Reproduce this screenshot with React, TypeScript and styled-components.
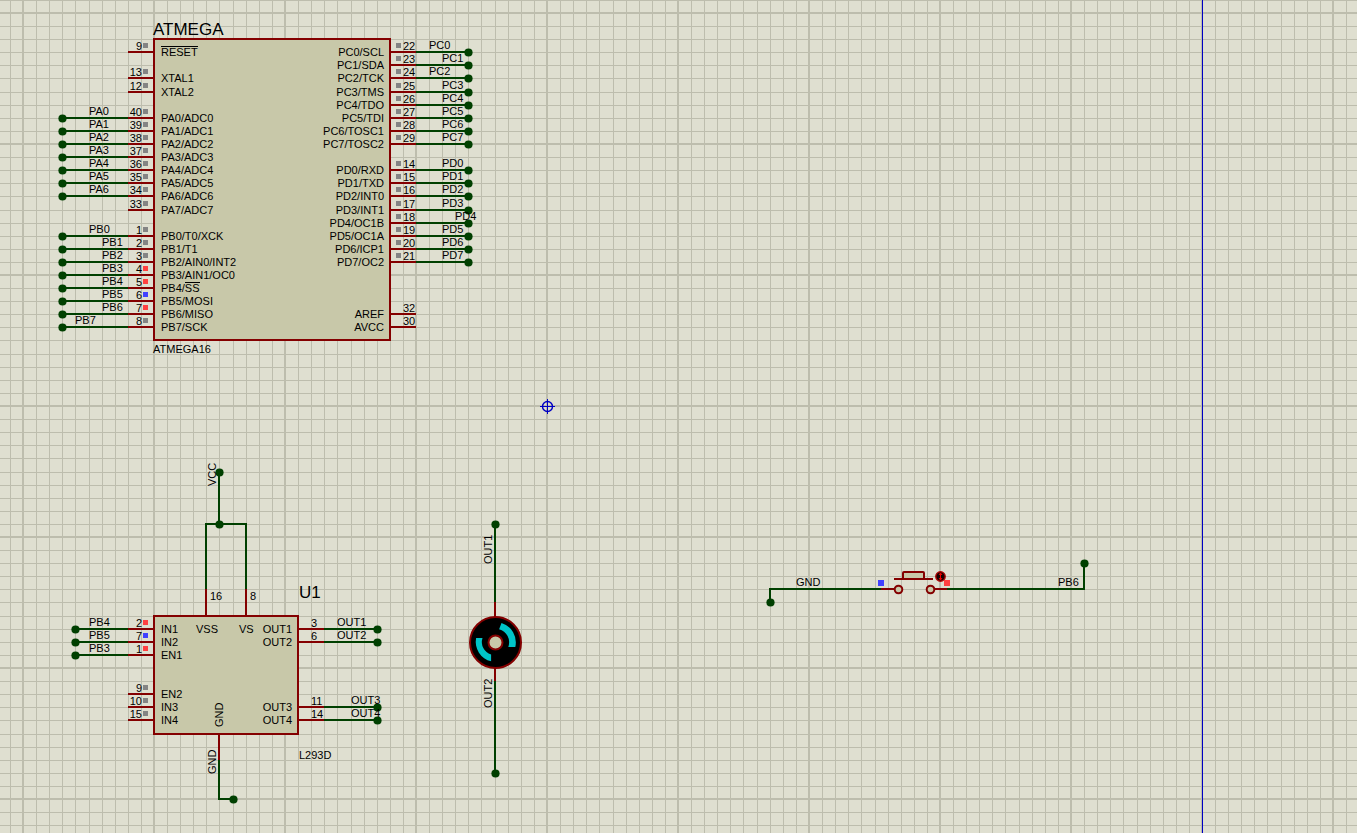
import React from "react";
import styled, { createGlobalStyle } from "styled-components";

const color = {
  paper: "#dfdfd0",
  grid: "#bdbdad",
  body: "#c8c8a9",
  part: "#840000",
  wire: "#004000",
  sheet: "#0000c4",
  ink: "#000000",
  idle: "#848484",
  high: "#ff4141",
  low: "#4141ff",
};

type Level = "idle" | "high" | "low";

/* One grid cell is 13.1px, so twenty cells make an even 262px. */
const snap = (origin: number, cell: number) => {
  const phase = ((cell % 20) + 20) % 20;
  return Math.round(origin + (cell * 131) / 10 + (phase === 5 ? 0.01 : -0.01));
};
const gx = (cell: number) => snap(547, cell);
const gy = (cell: number) => snap(406, cell);

const GlobalStyle = createGlobalStyle`
  html, body, #root { height: 100%; }
  body {
    margin: 0;
    background: ${color.paper};
    color: ${color.ink};
    font-family: "Liberation Sans", Arial, sans-serif;
    font-size: 11px;
    line-height: 12px;
  }
`;

const Sheet = styled.main`
  position: relative;
  width: 100%;
  min-height: 100%;
  overflow: hidden;
`;

const Drawing = styled.svg`
  position: absolute;
  inset: 0;
  width: 100%;
  height: 100%;
  display: block;
`;

/* A part on the canvas: pin leads on both sides of the body, one grid row per cell. */
const ChipFrame = styled.section`
  position: absolute;
  display: grid;
  grid-template-columns: 26px 1fr 26px;
`;

const ChipBody = styled.div`
  grid-column: 2;
  grid-row: 1 / -1;
  margin: -1px;
  border: 2px solid ${color.part};
  background: ${color.body};
`;

const PinName = styled.span<{ $side: "left" | "right"; $row: number }>`
  grid-column: 2;
  grid-row: ${(p) => p.$row};
  justify-self: ${(p) => (p.$side === "left" ? "start" : "end")};
  align-self: end;
  margin: 0 6px -6px 7px;
  white-space: nowrap;
`;

const Lead = styled.div<{ $side: "left" | "right"; $row: number }>`
  grid-column: ${(p) => (p.$side === "left" ? 1 : 3)};
  grid-row: ${(p) => p.$row};
  display: grid;
  grid-template-columns: ${(p) => (p.$side === "left" ? "1fr 5px" : "5px 1fr")};
  column-gap: ${(p) => (p.$side === "left" ? 1 : 2)}px;
  padding: ${(p) => (p.$side === "left" ? "0 6px 0 0" : "0 0 0 6px")};
  align-items: end;
`;

const PinNumber = styled.span<{ $side: "left" | "right" }>`
  grid-row: 1;
  grid-column: ${(p) => (p.$side === "left" ? 1 : 2)};
  text-align: ${(p) => (p.$side === "left" ? "right" : "left")};
`;

const LeadProbe = styled.i<{ $side: "left" | "right"; $level: Level }>`
  grid-row: 1;
  grid-column: ${(p) => (p.$side === "left" ? 2 : 1)};
  height: 5px;
  margin-bottom: 4px;
  background: ${(p) => color[p.$level]};
`;

const ActiveLow = styled.span`
  display: inline-block;
  position: relative;
  &::before {
    content: "";
    position: absolute;
    inset: 0 0 auto;
    border-top: 1px solid ${color.ink};
  }
`;

const WireProbe = styled.i<{ $level: Level }>`
  position: absolute;
  width: 6px;
  height: 6px;
  background: ${(p) => color[p.$level]};
`;

const Caption = styled.span`
  position: absolute;
  white-space: nowrap;
`;

const Reference = styled.h2`
  position: absolute;
  margin: 0;
  font-size: 17px;
  font-weight: 400;
  line-height: 20px;
  white-space: nowrap;
`;

const UprightCaption = styled(Caption)`
  transform: rotate(-90deg);
  transform-origin: 0 0;
`;

interface Pin {
  row: number;
  num: string;
  name: string;
  bar?: string;
  level?: Level;
  net?: string;
  netAt?: number;
}

interface Chip {
  ref: string;
  left: number;
  right: number;
  top: number;
  bottom: number;
  leftEnd: number;
  rightEnd: number;
  leftPins: Pin[];
  rightPins: Pin[];
}

const pin = (
  row: number,
  num: number,
  name: string,
  level?: Level,
  net?: string,
  netAt?: number,
  bar?: string,
): Pin => ({ row, num: String(num), name, level, net, netAt, bar });

const atmega: Chip = {
  ref: "ATMEGA",
  left: -30,
  right: -12,
  top: -28,
  bottom: -5,
  leftEnd: -37,
  rightEnd: -6,
  leftPins: [
    pin(-27, 9, "", "idle", undefined, undefined, "RESET"),
    pin(-25, 13, "XTAL1", "idle"),
    pin(-24, 12, "XTAL2", "idle"),
    pin(-22, 40, "PA0/ADC0", "idle", "PA0", -35),
    pin(-21, 39, "PA1/ADC1", "idle", "PA1", -35),
    pin(-20, 38, "PA2/ADC2", "idle", "PA2", -35),
    pin(-19, 37, "PA3/ADC3", "idle", "PA3", -35),
    pin(-18, 36, "PA4/ADC4", "idle", "PA4", -35),
    pin(-17, 35, "PA5/ADC5", "idle", "PA5", -35),
    pin(-16, 34, "PA6/ADC6", "idle", "PA6", -35),
    pin(-15, 33, "PA7/ADC7", "idle"),
    pin(-13, 1, "PB0/T0/XCK", "idle", "PB0", -35),
    pin(-12, 2, "PB1/T1", "idle", "PB1", -34),
    pin(-11, 3, "PB2/AIN0/INT2", "idle", "PB2", -34),
    pin(-10, 4, "PB3/AIN1/OC0", "high", "PB3", -34),
    pin(-9, 5, "PB4/", "high", "PB4", -34, "SS"),
    pin(-8, 6, "PB5/MOSI", "low", "PB5", -34),
    pin(-7, 7, "PB6/MISO", "high", "PB6", -34),
    pin(-6, 8, "PB7/SCK", "idle", "PB7", -36),
  ],
  rightPins: [
    pin(-27, 22, "PC0/SCL", "idle", "PC0", -9),
    pin(-26, 23, "PC1/SDA", "idle", "PC1", -8),
    pin(-25, 24, "PC2/TCK", "idle", "PC2", -9),
    pin(-24, 25, "PC3/TMS", "idle", "PC3", -8),
    pin(-23, 26, "PC4/TDO", "idle", "PC4", -8),
    pin(-22, 27, "PC5/TDI", "idle", "PC5", -8),
    pin(-21, 28, "PC6/TOSC1", "idle", "PC6", -8),
    pin(-20, 29, "PC7/TOSC2", "idle", "PC7", -8),
    pin(-18, 14, "PD0/RXD", "idle", "PD0", -8),
    pin(-17, 15, "PD1/TXD", "idle", "PD1", -8),
    pin(-16, 16, "PD2/INT0", "idle", "PD2", -8),
    pin(-15, 17, "PD3/INT1", "idle", "PD3", -8),
    pin(-14, 18, "PD4/OC1B", "idle", "PD4", -7),
    pin(-13, 19, "PD5/OC1A", "idle", "PD5", -8),
    pin(-12, 20, "PD6/ICP1", "idle", "PD6", -8),
    pin(-11, 21, "PD7/OC2", "idle", "PD7", -8),
    pin(-7, 32, "AREF"),
    pin(-6, 30, "AVCC"),
  ],
};

const driver: Chip = {
  ref: "U1",
  left: -30,
  right: -19,
  top: 16,
  bottom: 25,
  leftEnd: -36,
  rightEnd: -13,
  leftPins: [
    pin(17, 2, "IN1", "high", "PB4", -35),
    pin(18, 7, "IN2", "low", "PB5", -35),
    pin(19, 1, "EN1", "high", "PB3", -35),
    pin(22, 9, "EN2", "idle"),
    pin(23, 10, "IN3", "idle"),
    pin(24, 15, "IN4", "idle"),
  ],
  rightPins: [
    pin(17, 3, "OUT1", undefined, "OUT1", -16),
    pin(18, 6, "OUT2", undefined, "OUT2", -16),
    pin(23, 11, "OUT3", undefined, "OUT3", -15),
    pin(24, 14, "OUT4", undefined, "OUT4", -15),
  ],
};

const chips = [atmega, driver];

type Mark = { text: string; x: number; y: number };

/* x is the start of the text, y its baseline. */
const references: Mark[] = [
  { text: "ATMEGA", x: gx(-30) - 1, y: gy(-28) - 3 },
  { text: "U1", x: gx(-19) + 1, y: gy(15) - 3 },
];

const captions: Mark[] = [
  { text: "ATMEGA16", x: gx(-30) - 1, y: gy(-4) - 1 },
  { text: "L293D", x: gx(-19) + 1, y: gy(27) - 1 },
  { text: "VSS", x: gx(-26) - 10, y: gy(17) + 4 },
  { text: "VS", x: gx(-23) - 7, y: gy(17) + 4 },
  { text: "16", x: gx(-26) + 4, y: gy(15) - 2 },
  { text: "8", x: gx(-23) + 4, y: gy(15) - 2 },
  { text: "GND", x: gx(19), y: gy(14) - 3 },
  { text: "PB6", x: gx(39), y: gy(14) - 3 },
];

const uprightCaptions: Mark[] = [
  { text: "VCC", x: gx(-25) - 3, y: gy(6) + 1 },
  { text: "GND", x: gx(-25) + 4, y: gy(24) + 7 },
  { text: "GND", x: gx(-25) - 3, y: gy(28) + 1 },
  { text: "OUT1", x: gx(-4) - 3, y: gy(12) + 1 },
  { text: "OUT2", x: gx(-4) - 3, y: gy(23) + 1 },
];

type Point = [number, number];

function Line({ points, part }: { points: Point[]; part?: boolean }) {
  return (
    <polyline
      points={points.map((p) => p.join(",")).join(" ")}
      fill="none"
      stroke={part ? color.part : color.wire}
      strokeWidth={2}
    />
  );
}

function Dot({ x, y }: { x: number; y: number }) {
  return <circle cx={x + 0.5} cy={y + 0.5} r={4.1} fill={color.wire} />;
}

function Grid() {
  const cells = Array.from({ length: 20 }, (_, i) => i);
  return (
    <>
      <defs>
        <pattern id="grid" x={22} y={143} width={262} height={262} patternUnits="userSpaceOnUse">
          {cells.map((i) => {
            const major = i % 10 === 0;
            const at = snap(1, i) - (major ? 1 : 0);
            const size = major ? 2 : 1;
            return (
              <g key={i} fill={color.grid}>
                <rect x={at} y={0} width={size} height={262} />
                <rect x={0} y={at} width={262} height={size} />
              </g>
            );
          })}
        </pattern>
      </defs>
      <rect width="100%" height="100%" fill="url(#grid)" shapeRendering="crispEdges" />
      <rect x={gx(50)} y={0} width={1} height="100%" fill={color.sheet} />
    </>
  );
}

function ChipWires({ chip }: { chip: Chip }) {
  const leftTip = gx(chip.left - 2);
  const rightTip = gx(chip.right + 2);
  return (
    <>
      {chip.leftPins.map((p) => {
        const y = gy(p.row);
        return (
          <g key={p.num}>
            <Line part points={[[leftTip, y], [gx(chip.left), y]]} />
            {p.net && <Line points={[[gx(chip.leftEnd), y], [leftTip, y]]} />}
            {p.net && <Dot x={gx(chip.leftEnd)} y={y} />}
          </g>
        );
      })}
      {chip.rightPins.map((p) => {
        const y = gy(p.row);
        return (
          <g key={p.num}>
            <Line part points={[[gx(chip.right), y], [rightTip, y]]} />
            {p.net && <Line points={[[rightTip, y], [gx(chip.rightEnd), y]]} />}
            {p.net && <Dot x={gx(chip.rightEnd)} y={y} />}
          </g>
        );
      })}
    </>
  );
}

function PowerWires() {
  const x = gx(-25);
  return (
    <>
      <Line part points={[[gx(-26), gy(14)], [gx(-26), gy(16)]]} />
      <Line part points={[[gx(-23), gy(14)], [gx(-23), gy(16)]]} />
      <Line points={[[gx(-26), gy(14)], [gx(-26), gy(9)], [gx(-23), gy(9)], [gx(-23), gy(14)]]} />
      <Line points={[[x, gy(5)], [x, gy(9)]]} />
      <Dot x={x} y={gy(5)} />
      <Dot x={x} y={gy(9)} />
      <Line part points={[[x, gy(25)], [x, gy(27)]]} />
      <Line points={[[x, gy(27)], [x, gy(30)], [gx(-24), gy(30)]]} />
      <Dot x={gx(-24)} y={gy(30)} />
    </>
  );
}

function Motor() {
  const x = gx(-4);
  const y = gy(18);
  return (
    <>
      <Line points={[[x, gy(9)], [x, gy(15)]]} />
      <Line part points={[[x, gy(15)], [x, gy(21)]]} />
      <Line points={[[x, gy(21)], [x, gy(28)]]} />
      <Dot x={x} y={gy(9)} />
      <Dot x={x} y={gy(28)} />
      <g transform={`translate(${x + 0.5} ${y + 0.5})`}>
        <circle r={25.5} fill="#000" stroke={color.part} strokeWidth={2} />
        <path d="M6 -19.6A20.5 20.5 0 0 1 19.8 4.5H12.8A13.5 13.5 0 0 0 3.6 -13.2Z" fill="#00c4c8" />
        <path d="M-19.4 -4.5A20 20 0 0 0 -4.4 18.8V12A13 13 0 0 1 -13 -4.5Z" fill="#00c4c8" />
        <circle r={7} fill={color.body} stroke={color.part} strokeWidth={2} />
      </g>
    </>
  );
}

function PushButton() {
  const y = gy(14);
  return (
    <>
      <Line part points={[[880, y], [895, y]]} />
      <Line part points={[[934, y], [948, y]]} />
      <Line points={[[gx(17), gy(15)], [gx(17), y], [881, y]]} />
      <Line points={[[947, y], [gx(41), y], [gx(41), gy(12)]]} />
      <Dot x={gx(17)} y={gy(15)} />
      <Dot x={gx(41)} y={gy(12)} />
      <g stroke={color.part} fill={color.body} strokeWidth={2}>
        <rect x={903} y={572} width={21} height={7} rx={1} />
        <path d="M894 579H933" />
        <circle cx={898.5} cy={589.5} r={3.8} />
        <circle cx={930.5} cy={589.5} r={3.8} />
      </g>
      <circle cx={940.5} cy={576.5} r={4.7} fill="#180000" stroke="#b00000" strokeWidth={1.4} />
      <path
        d="M940.5 573V580M939 575L940.5 573L942 575M939 578L940.5 580L942 578"
        fill="none"
        stroke="#f00000"
        strokeWidth={1}
      />
    </>
  );
}

function Origin() {
  return (
    <g transform={`translate(${gx(0) + 0.5} ${gy(0) + 0.5})`} fill="none" stroke={color.sheet}>
      <circle r={5} strokeWidth={1.4} />
      <path d="M-7.5 0H7.5M0 -7.5V7.5" />
    </g>
  );
}

const ASCENT = 10;
const REFERENCE_ASCENT = 16;

function NetLabels({ chip }: { chip: Chip }) {
  return (
    <>
      {[...chip.leftPins, ...chip.rightPins].map(
        (p) =>
          p.net &&
          p.netAt !== undefined && (
            <Caption key={p.num} style={{ left: gx(p.netAt), top: gy(p.row) - 3 - ASCENT }}>
              {p.net}
            </Caption>
          ),
      )}
    </>
  );
}

function ChipPins({ pins, side, top }: { pins: Pin[]; side: "left" | "right"; top: number }) {
  return (
    <>
      {pins.map((p) => (
        <React.Fragment key={p.num}>
          <Lead $side={side} $row={p.row - top}>
            <PinNumber $side={side}>{p.num}</PinNumber>
            {p.level && <LeadProbe $side={side} $level={p.level} />}
          </Lead>
          <PinName $side={side} $row={p.row - top}>
            {p.name}
            {p.bar && <ActiveLow>{p.bar}</ActiveLow>}
          </PinName>
        </React.Fragment>
      ))}
    </>
  );
}

function ChipView({ chip }: { chip: Chip }) {
  const left = gx(chip.left) - 26;
  const rows = Array.from(
    { length: chip.bottom - chip.top },
    (_, i) => `${gy(chip.top + i + 1) - gy(chip.top + i)}px`,
  );
  return (
    <ChipFrame
      aria-label={chip.ref}
      style={{
        left,
        top: gy(chip.top),
        width: gx(chip.right) + 26 - left,
        gridTemplateRows: rows.join(" "),
      }}
    >
      <ChipBody />
      <ChipPins pins={chip.leftPins} side="left" top={chip.top} />
      <ChipPins pins={chip.rightPins} side="right" top={chip.top} />
    </ChipFrame>
  );
}

export default function App() {
  return (
    <>
      <GlobalStyle />
      <Sheet>
        <Drawing aria-hidden="true">
          <Grid />
          {chips.map((chip) => (
            <ChipWires key={chip.ref} chip={chip} />
          ))}
          <PowerWires />
          <Motor />
          <PushButton />
          <Origin />
        </Drawing>
        {chips.map((chip) => (
          <React.Fragment key={chip.ref}>
            <ChipView chip={chip} />
            <NetLabels chip={chip} />
          </React.Fragment>
        ))}
        {references.map((m) => (
          <Reference key={m.text} style={{ left: m.x, top: m.y - REFERENCE_ASCENT }}>
            {m.text}
          </Reference>
        ))}
        {captions.map((m) => (
          <Caption key={m.text} style={{ left: m.x, top: m.y - ASCENT }}>
            {m.text}
          </Caption>
        ))}
        {uprightCaptions.map((m) => (
          <UprightCaption key={`${m.text}-${m.y}`} style={{ left: m.x - ASCENT, top: m.y }}>
            {m.text}
          </UprightCaption>
        ))}
        <WireProbe $level="low" style={{ left: gx(25) + 3, top: gy(14) - 9 }} />
        <WireProbe $level="high" style={{ left: gx(30) + 4, top: gy(14) - 9 }} />
      </Sheet>
    </>
  );
}
